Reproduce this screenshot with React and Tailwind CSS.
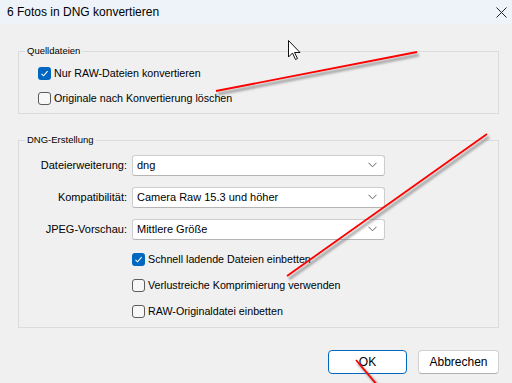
import React from "react";

const font = { fontFamily: '"Liberation Sans", Arial, sans-serif' };

const Check = ({ checked, label }) => (
  <div className="flex items-center gap-[2px] h-[25px]">
    {checked ? (
      <span className="w-[13px] h-[13px] rounded-[3px] bg-[#0067c0] flex items-center justify-center">
        <svg width="9" height="9" viewBox="0 0 9 9">
          <path d="M1.5 4.8 L3.6 6.8 L7.6 2.2" fill="none" stroke="#fff" strokeWidth="1.1" />
        </svg>
      </span>
    ) : (
      <span className="w-[13px] h-[13px] rounded-[3px] border border-[#5c5c5c] bg-[#f7f7f7]" />
    )}
    <span className="text-[10.7px] text-black leading-none ml-[1px]">{label}</span>
  </div>
);

const Select = ({ label, value }) => (
  <div className="flex items-center h-[32px]">
    <div className="w-[109px] text-right text-[11px] text-black pr-[1px]">{label}</div>
    <div className="ml-[4px] w-[253px] h-[21px] bg-white border border-[#cdcdcd] border-b-[#b5b5b5] rounded-[3px] flex items-center justify-between pl-[4px] pr-[7px]">
      <span className="text-[11px] text-black">{value}</span>
      <svg width="9" height="6" viewBox="0 0 9 6">
        <path d="M0.5 0.8 L4.5 4.8 L8.5 0.8" fill="none" stroke="#606060" strokeWidth="1" />
      </svg>
    </div>
  </div>
);

const Group = ({ title, className, children }) => (
  <div className={"relative border border-[#dcdcdc] " + className}>
    <span className="absolute left-[6px] -top-[7px] bg-[#f0f0f0] px-[2px] text-[9.5px] leading-[12px] text-black">
      {title}
    </span>
    {children}
  </div>
);

export default function App() {
  return (
    <div className="relative w-[512px] h-[383px] bg-[#f0f0f0] overflow-hidden" style={font}>
      <div className="h-[24px] bg-[#eef3f9] flex items-center justify-between pl-[7px] pr-[5px]">
        <span className="text-[12px] text-black">6 Fotos in DNG konvertieren</span>
        <svg width="11" height="11" viewBox="0 0 11 11">
          <path d="M0.5 0.5 L10.5 10.5 M10.5 0.5 L0.5 10.5" stroke="#222" strokeWidth="1" />
        </svg>
      </div>

      <div className="pl-[18px] pr-[13px] pt-[27px]">
        <Group title="Quelldateien" className="h-[63px] pt-[9px] pl-[19px]">
          <Check checked label="Nur RAW-Dateien konvertieren" />
          <Check label="Originale nach Konvertierung löschen" />
        </Group>

        <Group title="DNG-Erstellung" className="mt-[26px] h-[188px] pt-[8px]">
          <Select label="Dateierweiterung:" value="dng" />
          <Select label="Kompatibilität:" value="Camera Raw 15.3 und höher" />
          <Select label="JPEG-Vorschau:" value="Mittlere Größe" />
          <div className="mt-[1px] pl-[113px] [&>div]:h-[26px]">
            <Check checked label="Schnell ladende Dateien einbetten" />
            <Check label="Verlustreiche Komprimierung verwenden" />
            <Check label="RAW-Originaldatei einbetten" />
          </div>
        </Group>

        <div className="mt-[22px] flex justify-end gap-[11px]">
          <button className="w-[79px] h-[24px] bg-white border border-[#0067c0] rounded-[4px] text-[12px] text-black">
            OK
          </button>
          <button className="w-[81px] h-[24px] bg-white border border-[#d0d0d0] border-b-[#b0b0b0] rounded-[4px] text-[12px] text-black">
            Abbrechen
          </button>
        </div>
      </div>

      {/* annotations and cursor drawn over the dialog */}
      <svg className="absolute inset-0 pointer-events-none" width="512" height="383">
        <defs>
          <filter id="sh" x="-10%" y="-10%" width="120%" height="120%">
            <feGaussianBlur stdDeviation="1.2" />
          </filter>
        </defs>
        <g stroke="#777" strokeOpacity="0.6" strokeWidth="3" filter="url(#sh)">
          <line x1="218" y1="94" x2="419" y2="55" />
          <line x1="289" y1="279" x2="489" y2="137" />
          <line x1="358" y1="363" x2="380" y2="388" />
        </g>
        <g stroke="#ff0000" strokeWidth="1.8">
          <line x1="216" y1="91" x2="417" y2="52" />
          <line x1="287" y1="276" x2="487" y2="134" />
          <line x1="356" y1="360" x2="378" y2="386" />
        </g>
        <path
          d="M288.5 40.5 V57 L292.5 53 L295.5 59.5 L297.5 58.5 L294.5 52.5 H300 Z"
          fill="#fff"
          stroke="#111"
          strokeWidth="1"
          strokeLinejoin="miter"
        />
      </svg>
    </div>
  );
}
